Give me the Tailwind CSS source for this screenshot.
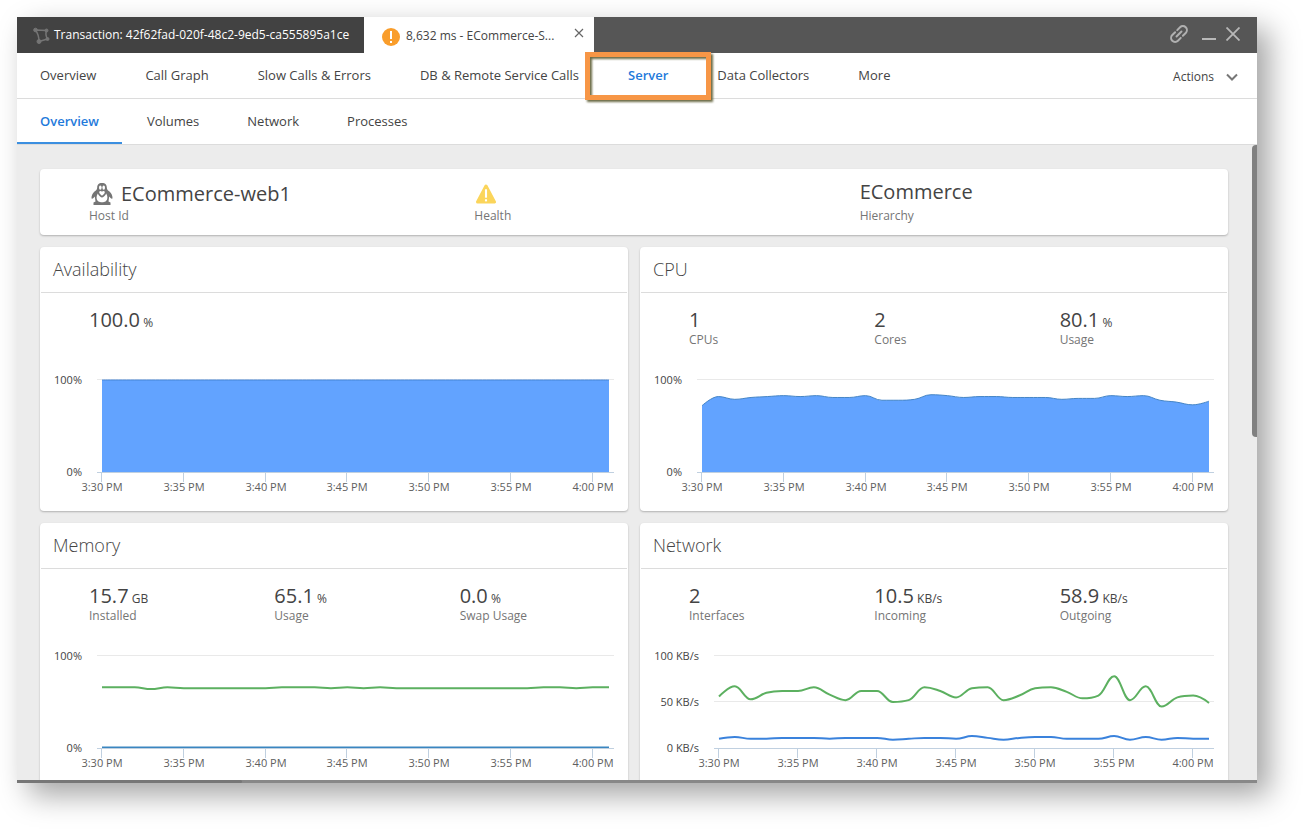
<!DOCTYPE html>
<html lang="en">
<head>
  <meta charset="UTF-8">
  <meta name="viewport" content="width=device-width, initial-scale=1.0">
  <title>Transaction - Server</title>
  <script src="https://cdn.jsdelivr.net/npm/@tailwindcss/browser@4"></script>
</head>
<body class="h-screen overflow-hidden bg-white pt-[17px] pl-[17px] pr-12 pb-12 font-['Open_Sans','Noto_Sans',sans-serif] text-[#444]">
  <div class="flex flex-col h-full shadow-[12px_12px_28px_rgba(0,0,0,0.36)]">

    <!-- Window tabs -->
    <header class="flex shrink-0 h-9 bg-[#565656]">
      <div class="flex items-center gap-1 w-[347px] pl-4 bg-[#424242] text-white text-xs font-medium whitespace-nowrap">
        <svg class="w-[17px] h-[17px] shrink-0" viewBox="0 0 17 17" fill="#757575" stroke="#757575">
          <path d="M2.500 3L13.500 3.500Q12 8 14.500 12L6 14.500Q6 8 2.500 3Z" fill="none" stroke-width="1.500"/>
          <circle cx="2.500" cy="3" r="1.800"/>
          <circle cx="13.500" cy="3.500" r="1.500"/>
          <circle cx="14.500" cy="12" r="1.500"/>
          <circle cx="6" cy="14.500" r="2"/>
        </svg>
        <span>Transaction: 42f62fad-020f-48c2-9ed5-ca555895a1ce</span>
      </div>
      <div class="flex items-center w-[230px] pl-[18px] pr-[10px] bg-white text-xs whitespace-nowrap">
        <svg class="w-[18px] h-[18px] shrink-0 mr-[6px] mt-1" viewBox="0 0 18 18">
          <circle cx="9" cy="9" r="9" fill="#f99d2b"/>
          <rect x="8" y="3" width="2" height="8" fill="#fff"/>
          <rect x="8" y="13" width="2" height="2" fill="#fff"/>
        </svg>
        <span class="pt-[2px]">8,632 ms - ECommerce-S...</span>
        <button class="ml-auto mb-1" aria-label="Close tab">
          <svg class="w-[10px] h-[10px]" viewBox="0 0 10 10" stroke="#666" stroke-width="1.200"><path d="M1 1L9 9M9 1L1 9"/></svg>
        </button>
      </div>
      <div class="flex items-center ml-auto pr-[17px] pb-[2px] gap-3">
        <button class="mr-[2px]" aria-label="Copy link">
          <svg class="block w-[18px] h-[18px]" viewBox="0 0 18 18" fill="none" stroke="#b0b0b0" stroke-width="2" stroke-linecap="round">
            <g transform="rotate(-45 9 9)">
              <path d="M7.500 5H3.500a4 4 0 0 0 0 8h4M10.500 5H14.500a4 4 0 0 1 0 8h-4M5.500 9h7"/>
            </g>
          </svg>
        </button>
        <button aria-label="Minimize">
          <svg class="block w-[14px] h-[14px]" viewBox="0 0 14 14"><rect y="11" width="14" height="2" fill="#b8b8b8"/></svg>
        </button>
        <button class="-ml-[2px]" aria-label="Close">
          <svg class="block w-[14px] h-[14px]" viewBox="0 0 14 14" stroke="#b8b8b8" stroke-width="1.800"><path d="M.5 .5L13.500 13.500M13.500 .5L.5 13.500"/></svg>
        </button>
      </div>
    </header>

    <!-- Transaction sections -->
    <nav class="flex shrink-0 items-center gap-[3px] h-[46px] bg-white border-b border-[#dcdcdc] text-[13px] whitespace-nowrap">
      <a href="#" class="px-[23px]">Overview</a>
      <a href="#" class="px-[23px]">Call Graph</a>
      <a href="#" class="px-[23px]">Slow Calls &amp; Errors</a>
      <a href="#" class="px-[23px]">DB &amp; Remote Service Calls</a>
      <a href="#" class="relative flex items-center h-full px-[23px] font-semibold text-[#1f7adb]">Server
        <span class="absolute -inset-x-5 -top-px -bottom-[2px] border-[5px] border-[#f79646] drop-shadow-[2px_2px_1px_#6b6b45]"></span>
      </a>
      <a href="#" class="px-[23px]">Data Collectors</a>
      <a href="#" class="px-[23px]">More</a>
      <button class="flex items-center gap-3 ml-auto pr-[19px] pt-[2px] text-xs">Actions
        <svg class="w-3 h-2" viewBox="0 0 12 8" fill="none" stroke="#777" stroke-width="2"><path d="M1 1.500L6 6.500L11 1.500"/></svg>
      </button>
    </nav>

    <!-- Server pages -->
    <nav class="flex shrink-0 gap-[2px] h-[46px] bg-white border-b border-[#dcdcdc] text-[13px] leading-[44px]">
      <a href="#" class="px-[23px] font-semibold text-[#1f7adb] border-b-2 border-[#3b8fe0] h-[45px]">Overview</a>
      <a href="#" class="px-[23px]">Volumes</a>
      <a href="#" class="px-[23px]">Network</a>
      <a href="#" class="px-[23px]">Processes</a>
    </nav>

    <main class="relative flex-1 min-h-0 overflow-hidden bg-[#ececec] pt-6 pl-[23px] pr-[29px]">
      <div class="absolute right-0 top-0 w-[5px] h-[292px] bg-[#808080] rounded-l-sm"></div>

      <section class="grid grid-cols-3 h-[66px] px-4 pt-[11px] mb-3 bg-white rounded shadow-[0_1px_2px_rgba(0,0,0,0.25)]">
        <div class="pl-[33px]">
          <div class="flex items-center gap-2 h-7 pl-[2px] text-xl leading-7">
            <svg class="w-[22px] h-[22px]" viewBox="0 0 22 22">
              <path d="M11 0C7.500 0 6.200 2 6.200 4.500C6.200 6.500 5 7.500 3.500 8.500C1.500 10.500 .2 13 .5 15.500C1.500 16 2.800 15 3.800 13.500L4.500 18.500L2.500 19.500V22H19.500V19.500L17.500 18.500L18.200 13.500C19.200 15 20.500 16 21.500 15.500C21.800 13 20.500 10.500 18.500 8.500C17 7.500 15.800 6.500 15.800 4.500C15.800 2 14.500 0 11 0Z" fill="#757575"/>
              <path d="M6.800 10.500C5 13.500 5.200 17 7.500 18.500C9 19.500 13 19.500 14.500 18.500C16.800 17 17 13.500 15.200 10.500C14.500 12.500 12 14.500 11 14.500C10 14.500 7.500 12.500 6.800 10.500Z" fill="#fff"/>
              <path d="M8.200 8.800C8.800 7.700 10.300 7.700 11 8.700C11.700 7.700 13.200 7.700 13.800 8.800C14.200 10.500 12 12 11 12.700C10 12 7.800 10.500 8.200 8.800Z" fill="#fff"/>
              <ellipse cx="9.300" cy="4.600" rx="1.300" ry="2.200" fill="#fff"/>
              <ellipse cx="12.700" cy="4.600" rx="1.300" ry="2.200" fill="#fff"/>
            </svg>
            <span>ECommerce-web1</span>
          </div>
          <div class="text-xs leading-4 text-[#757575]">Host Id</div>
        </div>
        <div class="pl-[33px]">
          <div class="flex items-center h-7 pl-[2px]">
            <svg class="w-5 h-5" viewBox="0 0 19 19">
              <path d="M9.500 2L17.500 17H1.500Z" fill="#fbd55b" stroke="#fbd55b" stroke-width="3" stroke-linejoin="round"/>
              <rect x="8.500" y="5" width="2" height="8" fill="#fff"/>
              <rect x="8.500" y="14.500" width="2" height="2" fill="#fff"/>
            </svg>
          </div>
          <div class="text-xs leading-4 text-[#757575]">Health</div>
        </div>
        <div class="pl-[33px]">
          <div class="h-7 text-xl leading-6">ECommerce</div>
          <div class="text-xs leading-4 text-[#757575]">Hierarchy</div>
        </div>
      </section>

      <div class="grid grid-cols-2 gap-3">
        <section class="bg-white rounded shadow-[0_1px_2px_rgba(0,0,0,0.25)]">
          <h2 class="h-[46px] mx-px px-3 border-b border-[#dcdcdc] text-lg leading-[45px] font-light">Availability</h2>
          <div class="grid grid-cols-3 h-[62px] px-4 pt-[15px]">
            <div class="pl-[33px] text-xl leading-6">100.0 <span class="-ml-[2px] text-xs">%</span></div>
          </div>
          <svg id="availability" class="block w-full" viewBox="0 0 588 156"></svg>
        </section>

        <section class="bg-white rounded shadow-[0_1px_2px_rgba(0,0,0,0.25)]">
          <h2 class="h-[46px] mx-px px-3 border-b border-[#dcdcdc] text-lg leading-[45px] font-light">CPU</h2>
          <div class="grid grid-cols-3 h-[62px] px-4 pt-[15px]">
            <div class="pl-[33px]">
              <div class="text-xl leading-6">1</div>
              <div class="text-xs leading-4 text-[#757575]">CPUs</div>
            </div>
            <div class="pl-[33px]">
              <div class="text-xl leading-6">2</div>
              <div class="text-xs leading-4 text-[#757575]">Cores</div>
            </div>
            <div class="pl-[33px]">
              <div class="text-xl leading-6">80.1 <span class="-ml-[2px] text-xs">%</span></div>
              <div class="text-xs leading-4 text-[#757575]">Usage</div>
            </div>
          </div>
          <svg id="cpu" class="block w-full" viewBox="0 0 588 156"></svg>
        </section>

        <section class="bg-white rounded shadow-[0_1px_2px_rgba(0,0,0,0.25)]">
          <h2 class="h-[46px] mx-px px-3 border-b border-[#dcdcdc] text-lg leading-[45px] font-light">Memory</h2>
          <div class="grid grid-cols-3 h-[62px] px-4 pt-[15px]">
            <div class="pl-[33px]">
              <div class="text-xl leading-6">15.7 <span class="-ml-[2px] text-xs">GB</span></div>
              <div class="text-xs leading-4 text-[#757575]">Installed</div>
            </div>
            <div class="pl-[33px]">
              <div class="text-xl leading-6">65.1 <span class="-ml-[2px] text-xs">%</span></div>
              <div class="text-xs leading-4 text-[#757575]">Usage</div>
            </div>
            <div class="pl-[33px]">
              <div class="text-xl leading-6">0.0 <span class="-ml-[2px] text-xs">%</span></div>
              <div class="text-xs leading-4 text-[#757575]">Swap Usage</div>
            </div>
          </div>
          <svg id="memory" class="block w-full" viewBox="0 0 588 156"></svg>
        </section>

        <section class="bg-white rounded shadow-[0_1px_2px_rgba(0,0,0,0.25)]">
          <h2 class="h-[46px] mx-px px-3 border-b border-[#dcdcdc] text-lg leading-[45px] font-light">Network</h2>
          <div class="grid grid-cols-3 h-[62px] px-4 pt-[15px]">
            <div class="pl-[33px]">
              <div class="text-xl leading-6">2</div>
              <div class="text-xs leading-4 text-[#757575]">Interfaces</div>
            </div>
            <div class="pl-[33px]">
              <div class="text-xl leading-6">10.5 <span class="-ml-[2px] text-xs">KB/s</span></div>
              <div class="text-xs leading-4 text-[#757575]">Incoming</div>
            </div>
            <div class="pl-[33px]">
              <div class="text-xl leading-6">58.9 <span class="-ml-[2px] text-xs">KB/s</span></div>
              <div class="text-xs leading-4 text-[#757575]">Outgoing</div>
            </div>
          </div>
          <svg id="network" class="block w-full" viewBox="0 0 588 156"></svg>
        </section>
      </div>
    </main>

    <!-- Horizontal scrollbar -->
    <div class="shrink-0 h-[3px] bg-[#888]">
      <div class="w-[225px] h-full bg-[#777] rounded-r-sm"></div>
    </div>
  </div>

  <script>
    const TOP = 25;
    const BOTTOM = 117;
    const RIGHT = 569;
    const times = ['3:30 PM', '3:35 PM', '3:40 PM', '3:45 PM', '3:50 PM', '3:55 PM', '4:00 PM'];

    // One point per minute, joined by a smooth curve
    function spline(values, left) {
      const step = (RIGHT - left) / (values.length - 1);
      const pts = values.map((v, i) => [left + i * step, BOTTOM - v * (BOTTOM - TOP) / 100]);
      let d = `M${pts[0][0]} ${pts[0][1]}`;
      let ctrl = pts[0];
      for (let i = 1; i < pts.length; i++) {
        const [x, y] = pts[i];
        const prev = pts[i - 1];
        const next = pts[i + 1];
        let lx = x, ly = y, rx = x, ry = y;
        if (next) {
          lx = (1.5 * x + prev[0]) / 2.5;
          ly = (1.5 * y + prev[1]) / 2.5;
          rx = (1.5 * x + next[0]) / 2.5;
          ry = (1.5 * y + next[1]) / 2.5;
          const fix = (ry - ly) * (rx - x) / (rx - lx) + y - ry;
          ly += fix;
          ry += fix;
          // Keep the curve from overshooting its neighbours
          if (ly > prev[1] && ly > y) { ly = Math.max(prev[1], y); ry = 2 * y - ly; }
          else if (ly < prev[1] && ly < y) { ly = Math.min(prev[1], y); ry = 2 * y - ly; }
          if (ry > next[1] && ry > y) { ry = Math.max(next[1], y); ly = 2 * y - ry; }
          else if (ry < next[1] && ry < y) { ry = Math.min(next[1], y); ly = 2 * y - ry; }
        }
        d += `C${ctrl[0]} ${ctrl[1]} ${lx} ${ly} ${x} ${y}`;
        ctrl = [rx, ry];
      }
      return d;
    }

    function drawChart(id, left, labels, series) {
      let out = '';
      labels.forEach((label, i) => {
        const y = TOP + i * (BOTTOM - TOP) / (labels.length - 1);
        if (i < labels.length - 1) {
          out += `<path d="M${left - 5} ${y - 0.5}H574" stroke="#e9e9e9"/>`;
        }
        out += `<text x="${left - 20}" y="${y + 4}" text-anchor="end" class="text-[11px] fill-[#444]">${label}</text>`;
      });
      series.forEach(s => {
        const d = spline(s.values, left);
        if (s.fill) {
          out += `<path d="${d}V${BOTTOM}H${left}Z" fill="${s.fill}"/>`;
        }
        out += `<path d="${d}" fill="none" stroke="${s.color}" stroke-width="${s.fill ? 1 : 2}"/>`;
      });
      out += `<path d="M${left - 5} 117.5H574" stroke="#c0d0e0"/>`;
      times.forEach((time, i) => {
        const x = Math.round(left + i * 5 * (RIGHT - left) / 31);
        out += `<path d="M${x - 0.5} 118V127" stroke="#c0d0e0"/>`;
        out += `<text x="${x}" y="136" text-anchor="middle" class="text-[11px] fill-[#606060]">${time}</text>`;
      });
      document.getElementById(id).innerHTML = out;
    }

    drawChart('availability', 62, ['100%', '0%'], [
      { values: Array(32).fill(100), color: '#4585d6', fill: '#62a3ff' }
    ]);
    drawChart('cpu', 62, ['100%', '0%'], [
      { values: [72, 82, 79, 81, 82, 83, 82, 83, 81, 81, 83, 78, 78, 79, 84, 83, 81, 82, 82, 81, 81, 81, 79, 80, 80, 83, 82, 83, 78, 76, 73, 77], color: '#4585c6', fill: '#62a3ff' }
    ]);
    drawChart('memory', 62, ['100%', '0%'], [
      { values: [66, 66, 66, 64, 66, 65, 65, 65, 65, 65, 65, 66, 66, 66, 65, 66, 65, 66, 65, 65, 65, 65, 65, 65, 65, 65, 65, 66, 66, 65, 66, 66], color: '#5cb060' },
      { values: Array(32).fill(0.5), color: '#3a86c0' }
    ]);
    drawChart('network', 79, ['100 KB/s', '50 KB/s', '0 KB/s'], [
      { values: [56, 67, 53, 60, 62, 62, 66, 58, 52, 62, 62, 50, 52, 66, 62, 55, 65, 66, 52, 57, 65, 66, 61, 54, 57, 78, 52, 67, 45, 55, 57, 49], color: '#5cb060' },
      { values: [10, 12, 10, 10, 11, 11, 11, 10, 11, 11, 11, 9, 10, 11, 11, 10, 13, 11, 9, 11, 12, 12, 10, 10, 10, 13, 9, 12, 9, 11, 10, 10], color: '#3a82dc' }
    ]);
  </script>
</body>
</html>
